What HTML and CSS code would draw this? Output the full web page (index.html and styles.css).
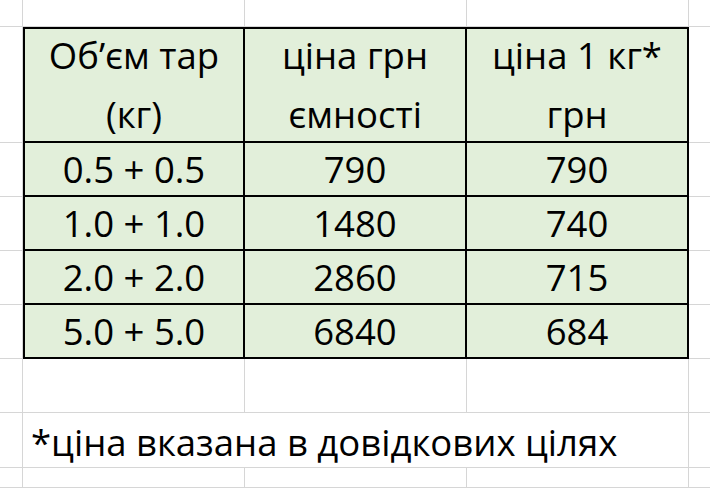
FILE: index.html
```html
<!DOCTYPE html>
<html lang="uk">
<head>
<meta charset="utf-8">
<title>Ціни</title>
<link rel="stylesheet" href="styles.css">
</head>
<body>
<div class="sheet">
  <div class="cell"></div><div class="cell"></div><div class="cell"></div><div class="cell"></div><div class="cell last"></div>

  <div class="cell"></div>
  <div class="cell t head first-col top-row">Об’єм тар<br>(кг)</div>
  <div class="cell t head top-row">ціна грн<br>ємності</div>
  <div class="cell t head top-row">ціна 1 кг*<br>грн</div>
  <div class="cell last"></div>

  <div class="cell"></div>
  <div class="cell t first-col">0.5 + 0.5</div>
  <div class="cell t">790</div>
  <div class="cell t">790</div>
  <div class="cell last"></div>

  <div class="cell"></div>
  <div class="cell t first-col">1.0 + 1.0</div>
  <div class="cell t">1480</div>
  <div class="cell t">740</div>
  <div class="cell last"></div>

  <div class="cell"></div>
  <div class="cell t first-col">2.0 + 2.0</div>
  <div class="cell t">2860</div>
  <div class="cell t">715</div>
  <div class="cell last"></div>

  <div class="cell"></div>
  <div class="cell t first-col">5.0 + 5.0</div>
  <div class="cell t">6840</div>
  <div class="cell t">684</div>
  <div class="cell last"></div>

  <div class="cell"></div><div class="cell"></div><div class="cell"></div><div class="cell"></div><div class="cell last"></div>

  <div class="cell"></div>
  <div class="cell note">*ціна вказана в довідкових цілях</div>
  <div class="cell last"></div>

  <div class="cell"></div><div class="cell"></div><div class="cell"></div><div class="cell"></div><div class="cell last"></div>
</div>
</body>
</html>
```

FILE: styles.css
```css
html, body {
  margin: 0;
  padding: 0;
  background: #ffffff;
}

.sheet {
  display: grid;
  width: 710px;
  height: 488px;
  overflow: hidden;
  grid-template-columns: 23px 222px 222px 222px 1fr;
  grid-template-rows: 27px 116px 54px 54px 54px 54px 54px 55px 1fr;
  font-family: "Open Sans", "Noto Sans", sans-serif;
  font-size: 36.5px;
  font-weight: 500;
  color: #000000;
}

.cell {
  box-sizing: border-box;
  border-right: 1px solid #d6d6d6;
  border-bottom: 1px solid #d6d6d6;
  min-width: 0;
}

.cell.last {
  border-right: none;
}

.t {
  background: #e2efda;
  border-right: 2px solid #000000;
  border-bottom: 2px solid #000000;
  display: flex;
  align-items: center;
  justify-content: center;
  text-align: center;
  line-height: 1;
  padding-top: 1px;
}

.t.first-col {
  border-left: 2px solid #000000;
}

.t.top-row {
  border-top: 2px solid #000000;
}

.head {
  line-height: 59px;
  padding-top: 0;
}

.note {
  grid-column: 2 / 5;
  display: flex;
  align-items: center;
  padding-left: 8px;
  padding-top: 3px;
  white-space: nowrap;
}
```
